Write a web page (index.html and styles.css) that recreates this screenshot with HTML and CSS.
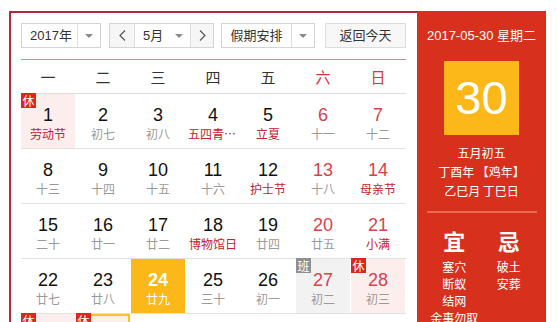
FILE: index.html
```html
<!DOCTYPE html>
<html lang="zh-CN">
<head>
<meta charset="utf-8">
<title>万年历</title>
<link rel="stylesheet" href="styles.css">
</head>
<body>
<div class="page">
  <div class="cal">
    <div class="main">
      <div class="bar">
        <div class="box year"><span class="val">2017年</span><span class="drop"><i class="tri"></i></span></div>
        <div class="box month">
          <span class="nav"><svg width="7" height="11" viewBox="0 0 7 11"><path d="M6 0.5 L1 5.5 L6 10.5" fill="none" stroke="#555" stroke-width="1.2"/></svg></span>
          <span class="val">5月</span><i class="tri"></i>
          <span class="nav next"><svg width="7" height="11" viewBox="0 0 7 11"><path d="M1 0.5 L6 5.5 L1 10.5" fill="none" stroke="#555" stroke-width="1.2"/></svg></span>
        </div>
        <div class="box holiday"><span class="val">假期安排</span><span class="drop"><i class="tri"></i></span></div>
        <div class="box today-btn">返回今天</div>
      </div>
      <div class="sep"></div>
      <div class="week">
        <span>一</span><span>二</span><span>三</span><span>四</span><span>五</span><span class="we">六</span><span class="we">日</span>
      </div>
      <div class="row">
        <div class="cell rest"><b class="tag">休</b><span class="n">1</span><span class="l fest">劳动节</span></div>
        <div class="cell"><span class="n">2</span><span class="l">初七</span></div>
        <div class="cell"><span class="n">3</span><span class="l">初八</span></div>
        <div class="cell"><span class="n">4</span><span class="l fest">五四青年节</span></div>
        <div class="cell"><span class="n">5</span><span class="l fest">立夏</span></div>
        <div class="cell we"><span class="n">6</span><span class="l">十一</span></div>
        <div class="cell we"><span class="n">7</span><span class="l">十二</span></div>
      </div>
      <div class="row">
        <div class="cell"><span class="n">8</span><span class="l">十三</span></div>
        <div class="cell"><span class="n">9</span><span class="l">十四</span></div>
        <div class="cell"><span class="n">10</span><span class="l">十五</span></div>
        <div class="cell"><span class="n">11</span><span class="l">十六</span></div>
        <div class="cell"><span class="n">12</span><span class="l fest">护士节</span></div>
        <div class="cell we"><span class="n">13</span><span class="l">十八</span></div>
        <div class="cell we"><span class="n">14</span><span class="l fest">母亲节</span></div>
      </div>
      <div class="row">
        <div class="cell"><span class="n">15</span><span class="l">二十</span></div>
        <div class="cell"><span class="n">16</span><span class="l">廿一</span></div>
        <div class="cell"><span class="n">17</span><span class="l">廿二</span></div>
        <div class="cell"><span class="n">18</span><span class="l fest">博物馆日</span></div>
        <div class="cell"><span class="n">19</span><span class="l">廿四</span></div>
        <div class="cell we"><span class="n">20</span><span class="l">廿五</span></div>
        <div class="cell we"><span class="n">21</span><span class="l fest">小满</span></div>
      </div>
      <div class="row">
        <div class="cell"><span class="n">22</span><span class="l">廿七</span></div>
        <div class="cell"><span class="n">23</span><span class="l">廿八</span></div>
        <div class="cell cur"><span class="n">24</span><span class="l">廿九</span></div>
        <div class="cell"><span class="n">25</span><span class="l">三十</span></div>
        <div class="cell"><span class="n">26</span><span class="l">初一</span></div>
        <div class="cell we work"><b class="tag gray">班</b><span class="n">27</span><span class="l">初二</span></div>
        <div class="cell we rest"><b class="tag">休</b><span class="n">28</span><span class="l">初三</span></div>
      </div>
      <div class="row">
        <div class="cell rest"><b class="tag">休</b><span class="n">29</span><span class="l">初四</span></div>
        <div class="cell rest sel"><b class="tag">休</b><span class="n">30</span><span class="l fest">端午节</span></div>
        <div class="cell"><span class="n">31</span><span class="l">初六</span></div>
        <div class="cell other"><span class="n">1</span><span class="l">儿童节</span></div>
        <div class="cell other"><span class="n">2</span><span class="l">初八</span></div>
        <div class="cell other"><span class="n">3</span><span class="l">初九</span></div>
        <div class="cell other"><span class="n">4</span><span class="l">初十</span></div>
      </div>
    </div>
    <aside class="side">
      <div class="date">2017-05-30 星期二</div>
      <div class="big">30</div>
      <div class="lunar">
        <div>五月初五</div>
        <div>丁酉年 【鸡年】</div>
        <div>乙巳月 丁巳日</div>
      </div>
      <div class="line"></div>
      <div class="yj">
        <div class="col">
          <div class="h">宜</div>
          <div>塞穴</div><div>断蚁</div><div>结网</div><div>余事勿取</div>
        </div>
        <div class="col">
          <div class="h">忌</div>
          <div>破土</div><div>安葬</div>
        </div>
      </div>
    </aside>
  </div>
</div>
</body>
</html>
```
FILE: styles.css
```css
* { box-sizing: border-box; }
html, body { margin: 0; padding: 0; background: #fff; }
body {
  font-family: "Liberation Sans", "Noto Sans CJK SC", sans-serif;
  color: #333;
  overflow: hidden;
}
.page { padding: 11px 0 0 9px; }
.cal { display: flex; width: 537px; align-items: flex-start; }
.main {
  width: 408px;
  border-top: 2px solid #b3283c;
  border-left: 2px solid #b3283c;
  padding: 10px 11px 0 10px;
}
.bar { display: flex; height: 25px; gap: 0; }
.box {
  height: 25px;
  border: 1px solid #d4d4d4;
  display: flex;
  align-items: center;
  font-size: 13px;
  line-height: 23px;
  color: #333;
  background: #fff;
}
.box .val { flex: 1; text-align: center; }
.drop {
  width: 23px;
  height: 23px;
  border-left: 1px solid #dedede;
  display: flex;
  align-items: center;
  justify-content: center;
}
.tri {
  display: inline-block;
  width: 0; height: 0;
  border-left: 4px solid transparent;
  border-right: 4px solid transparent;
  border-top: 4px solid #8a8a8a;
}
.year { width: 80px; }
.year .val { padding-left: 3px; }
.month { width: 105px; margin-left: 8px; }
.month .val { text-align: left; padding-left: 8px; flex: 1; }
.month .tri { margin-right: 7px; }
.nav {
  width: 25px; height: 23px;
  background: #f6f6f6;
  border-right: 1px solid #dedede;
  display: flex; align-items: center; justify-content: center;
}
.nav.next { width: 23px; border-right: 0; border-left: 1px solid #dedede; }
.holiday { width: 94px; margin-left: 7px; }
.today-btn {
  width: 81px; margin-left: 10px;
  justify-content: center;
  background: #f7f7f7;
  border-color: #dcdcdc;
}
.sep { height: 1px; background: #c98f93; margin-top: 11px; }
.week {
  display: grid;
  grid-template-columns: repeat(7, 54px);
  column-gap: 1px;
  height: 34px;
  border-bottom: 1px solid #dcdcdc;
  font-size: 15px;
  line-height: 33px;
  text-align: center;
  color: #333;
  font-family: "Noto Sans CJK SC", sans-serif;
}
.week .we { color: #d8333c; }
.row {
  display: grid;
  grid-template-columns: repeat(7, 54px);
  column-gap: 1px;
  height: 55px;
  border-bottom: 1px solid #e2e2e2;
}
.cell {
  position: relative;
  display: flex;
  flex-direction: column;
  align-items: center;
  padding-top: 10px;
  height: 54px;
}
.n {
  font-size: 18px;
  line-height: 22px;
  color: #111;
}
.l {
  font-size: 12px;
  line-height: 16px;
  color: #9a9a9a;
  font-family: "Noto Sans CJK SC", sans-serif;
  max-width: 50px;
  white-space: nowrap;
  overflow: hidden;
  text-overflow: ellipsis;
}
.l.fest { color: #c4202c; }
.cell.we .n { color: #d9414b; }
.rest { background: #fdeeee; }
.work { background: #f2f2f2; }
.cur { background: #fbb818; }
.cur .n, .cur .l { color: #fff; font-weight: bold; }
.cur .l { font-weight: normal; }
.sel { outline: 2px solid #f9c02a; outline-offset: -2px; }
.tag {
  position: absolute;
  left: 0; top: -1px;
  width: 15px; height: 15px;
  background: #d9281c;
  color: #fff;
  font-weight: normal;
  font-size: 12px;
  line-height: 15px;
  text-align: center;
  font-family: "Noto Sans CJK SC", sans-serif;
}
.tag.gray { background: #8f8f8f; }
.side {
  width: 129px;
  height: 330px;
  background: #d7311e;
  color: #fff;
  text-align: center;
  padding-top: 16px;
}
.date { font-size: 13px; line-height: 18px; }
.big {
  width: 75px; height: 74px;
  margin: 16px auto 0;
  background: #fbb818;
  font-size: 47px;
  line-height: 74px;
  color: #fff;
}
.lunar {
  margin-top: 8px;
  font-size: 12px;
  line-height: 19px;
  font-family: "Noto Sans CJK SC", sans-serif;
}
.line {
  width: 110px; height: 2px;
  margin: 11px auto 0;
  background: #ea6a52;
}
.yj {
  display: flex;
  padding: 0 10px;
  margin-top: 15px;
  font-family: "Noto Sans CJK SC", sans-serif;
  font-size: 12px;
  line-height: 17px;
}
.yj .col { width: 55px; }
.yj .h {
  font-size: 22px;
  line-height: 24px;
  font-weight: bold;
  margin-bottom: 6px;
}
```
